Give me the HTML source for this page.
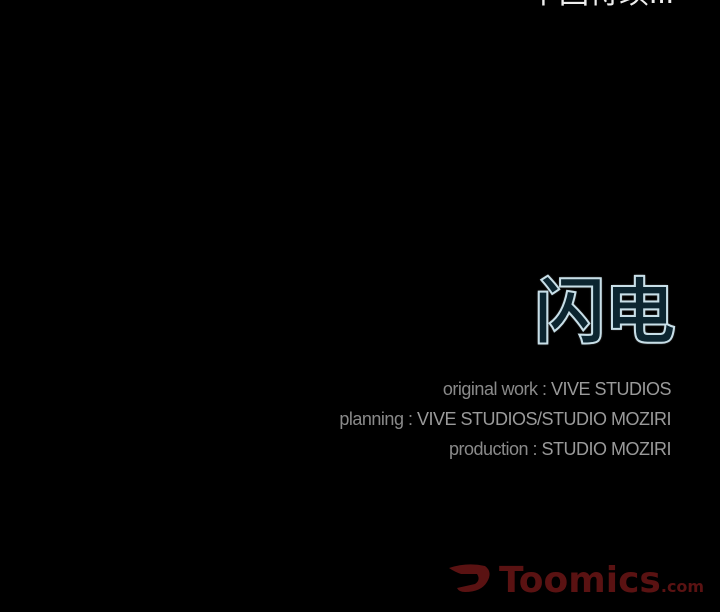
<!DOCTYPE html>
<html><head><meta charset="utf-8"><style>
html,body{margin:0;padding:0;background:#000;width:720px;height:612px;overflow:hidden;position:relative}
.t{position:absolute;font-family:"Liberation Sans","Noto Sans CJK SC",sans-serif}
#top{right:46px;top:-32px;font-size:30px;color:#eee;white-space:nowrap}
#title{right:46px;top:253px;font-size:72px;font-weight:bold;letter-spacing:-2px;color:#0c2530;
 -webkit-text-stroke:2px #c8dfe8;text-shadow:0 0 2px #fff}
.c{right:49px;font-size:18px;color:#8a8a8a;white-space:nowrap;letter-spacing:-0.5px}
.c b{font-weight:normal;color:#9a9a9a}
#logo{position:absolute;left:447px;top:560px;color:#5a1212;font-family:"DejaVu Sans",sans-serif;font-weight:bold;white-space:nowrap}
</style></head><body>
<div class="t" id="top">下回待续...</div>
<div class="t" id="title">闪电</div>
<div class="t c" style="top:379px">original work : <b>VIVE STUDIOS</b></div>
<div class="t c" style="top:409px">planning : <b>VIVE STUDIOS/STUDIO MOZIRI</b></div>
<div class="t c" style="top:439px">production : <b>STUDIO MOZIRI</b></div>
<div id="logo">
<svg width="46" height="34" viewBox="0 0 46 34" style="vertical-align:top;margin-top:2px"><path d="M2 6 Q20 0 38 4 Q46 10 40 20 Q34 30 18 30 Q12 30 10 26 L28 22 Q34 18 30 12 L14 12 Q8 10 2 6Z" fill="#5a1212"/></svg><span style="font-size:36px;margin-left:6px">Toomics</span><span style="font-size:16px">.com</span>
</div>
</body></html>
